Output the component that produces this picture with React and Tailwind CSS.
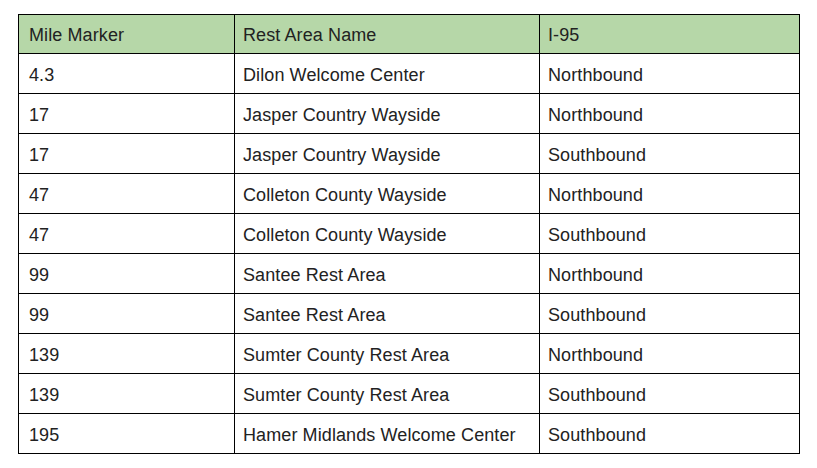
const rows = [
  ['4.3', 'Dilon Welcome Center', 'Northbound'],
  ['17', 'Jasper Country Wayside', 'Northbound'],
  ['17', 'Jasper Country Wayside', 'Southbound'],
  ['47', 'Colleton County Wayside', 'Northbound'],
  ['47', 'Colleton County Wayside', 'Southbound'],
  ['99', 'Santee Rest Area', 'Northbound'],
  ['99', 'Santee Rest Area', 'Southbound'],
  ['139', 'Sumter County Rest Area', 'Northbound'],
  ['139', 'Sumter County Rest Area', 'Southbound'],
  ['195', 'Hamer Midlands Welcome Center', 'Southbound'],
];

export default function App() {
  return (
    <div className="h-[468px] w-[817px] bg-white pl-[18px] pt-[14px] font-['Liberation_Sans',Arial,sans-serif] text-[18px] leading-none tracking-[0.1px] text-[#222]">
      <table className="table-fixed border-collapse">
        <colgroup>
          <col className="w-[216px]" />
          <col className="w-[305px]" />
          <col className="w-[260px]" />
        </colgroup>
        <thead>
          <tr className="h-[39px] bg-[#b6d7a8]">
            <th className="border border-black pl-[10px] pt-[2px] text-left font-normal">Mile Marker</th>
            <th className="border border-black pl-[8px] pt-[2px] text-left font-normal">Rest Area Name</th>
            <th className="border border-black pl-[8px] pt-[2px] text-left font-normal">I-95</th>
          </tr>
        </thead>
        <tbody>
          {rows.map((r, i) => (
            <tr key={i} className="h-[40px]">
              <td className="border border-black pl-[10px] pt-[2px]">{r[0]}</td>
              <td className="border border-black pl-[8px] pt-[2px]">{r[1]}</td>
              <td className="border border-black pl-[8px] pt-[2px]">{r[2]}</td>
            </tr>
          ))}
        </tbody>
      </table>
    </div>
  );
}
